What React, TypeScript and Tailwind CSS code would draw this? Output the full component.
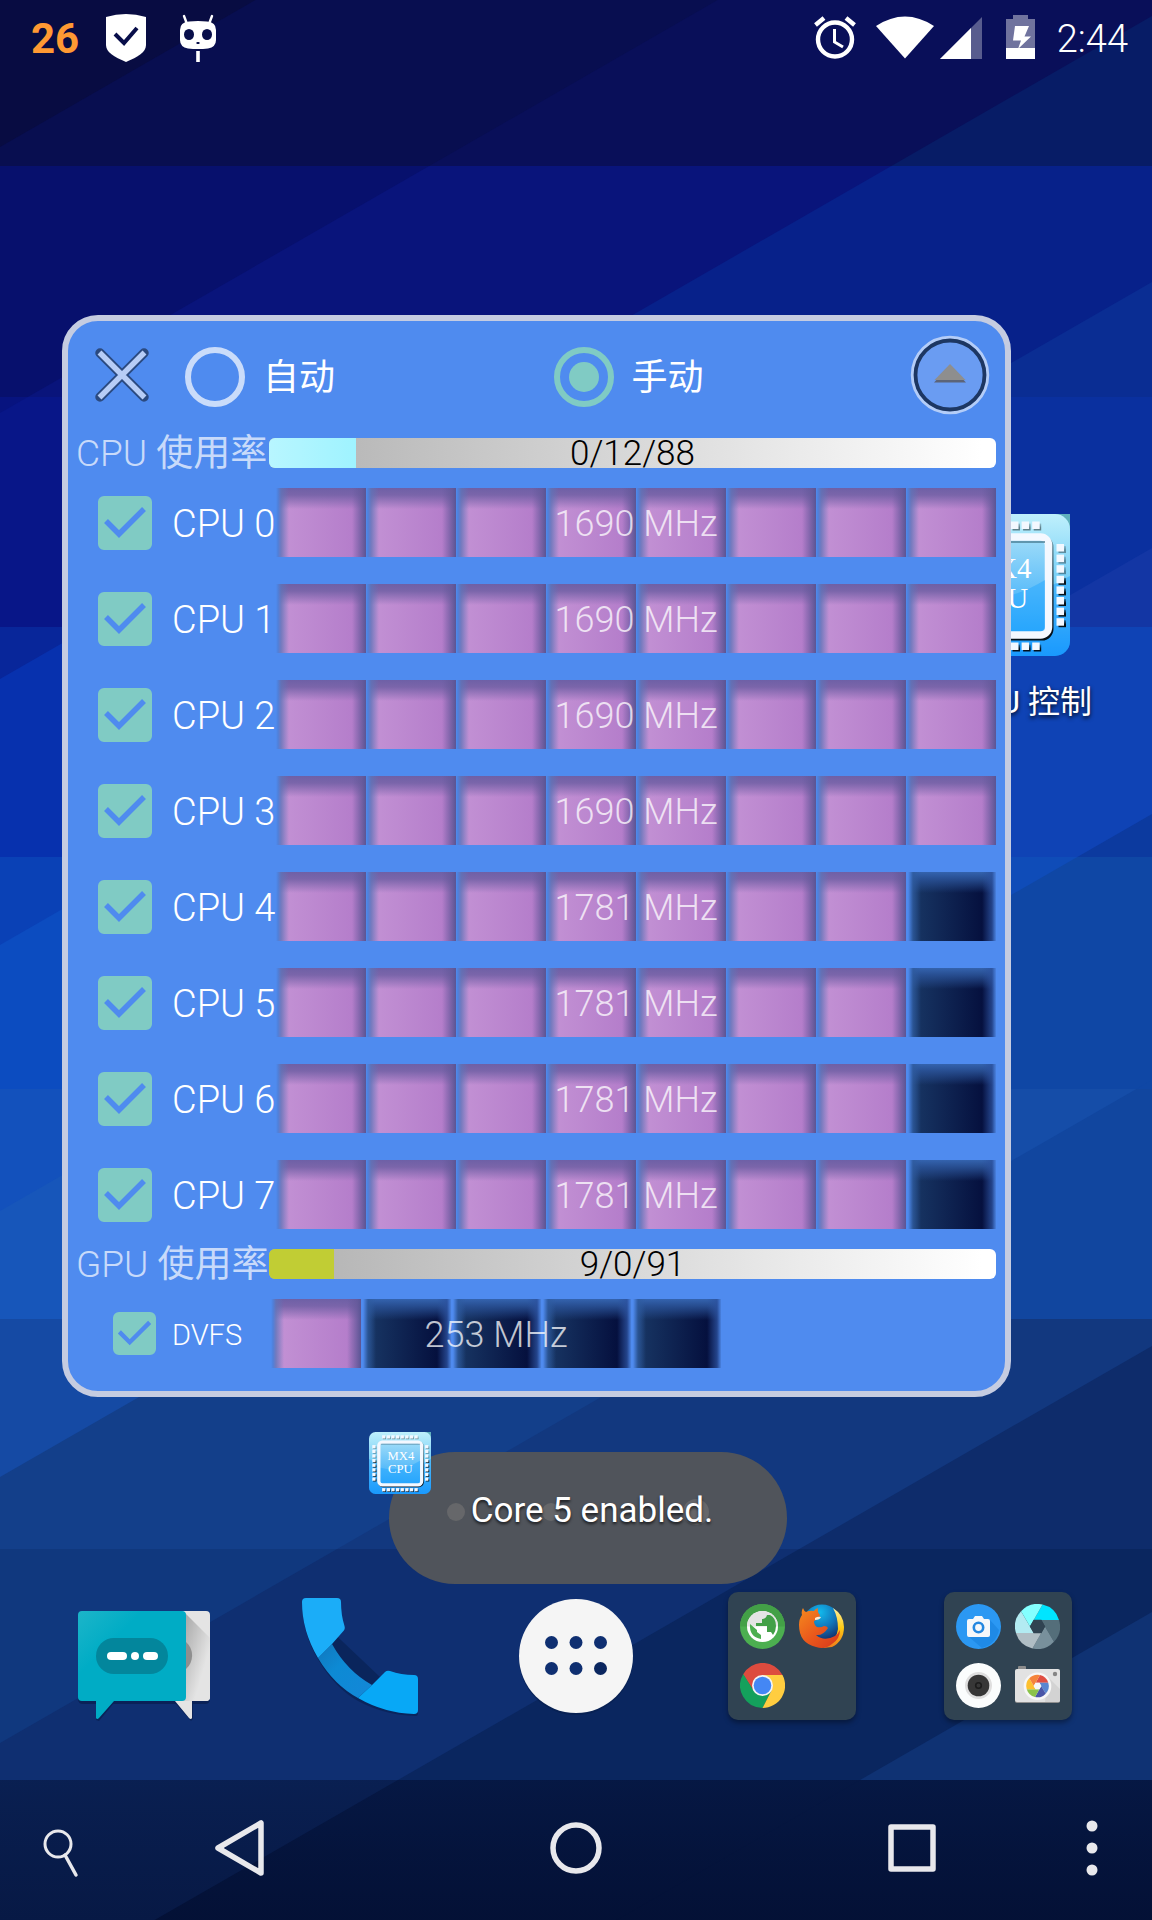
import React, { useId, useState } from "react";

/* ---------- wallpaper ---------- */

const BAND_EDGES = [0, 166, 397, 627, 857, 1089, 1319, 1549, 1780, 1920];
const STRIPE_EDGES = [-400, 147, 413, 679, 945, 1211, 1477, 1743, 2009, 2275, 2700];
const STRIPE_RISE = 663;

const BAND_COLOURS: string[][] = [
  ["#080c42", "#080e50", "#090f59", "#071c66", "#071c66", "#071c66", "#071c66", "#071c66", "#071c66", "#071c66"],
  ["#070f60", "#07106d", "#09147b", "#07218a", "#0a2d93", "#0a2d93", "#0a2d93", "#0a2d93", "#0a2d93", "#0a2d93"],
  ["#07127a", "#07137f", "#081688", "#07259a", "#0a309f", "#1336a4", "#1336a4", "#1336a4", "#1336a4", "#1336a4"],
  ["#08269a", "#08269a", "#08269a", "#0731ae", "#0a3bb2", "#0f43b5", "#0c3a9f", "#0c3a9f", "#0c3a9f", "#0c3a9f"],
  ["#0a40b6", "#0a40b6", "#0a40b6", "#0a41b6", "#0c4cc0", "#0f4cb8", "#0f47a5", "#0f47a5", "#0f47a5", "#0f47a5"],
  ["#1453bd", "#1453bd", "#1453bd", "#1453bd", "#1351bc", "#1756ba", "#154da8", "#11469f", "#11469f", "#11469f"],
  ["#164ba5", "#164ba5", "#164ba5", "#164ba5", "#164ba5", "#154aa4", "#133f8a", "#12387f", "#0e2c6b", "#0e2c6b"],
  ["#10387f", "#10387f", "#10387f", "#10387f", "#10387f", "#10387f", "#10387e", "#0f2f71", "#0a265f", "#0f3273"],
  ["#091f52", "#091f52", "#091f52", "#091f52", "#091f52", "#091f52", "#091f52", "#091e50", "#04133c", "#04133c"],
];

function Wallpaper() {
  return (
    <svg
      className="absolute inset-0 h-full w-full"
      viewBox="0 0 1152 1920"
      preserveAspectRatio="none"
      aria-hidden="true"
    >
      {BAND_COLOURS.map((colours, band) => {
        const top = BAND_EDGES[band];
        const bottom = BAND_EDGES[band + 1];
        return (
          <g key={band} clipPath={`url(#band-${band})`}>
            <clipPath id={`band-${band}`}>
              <rect x="0" y={top} width="1152" height={bottom - top} />
            </clipPath>
            <rect x="0" y={top} width="1152" height={bottom - top} fill={colours[0]} />
            {colours.map((colour, i) => (
              <polygon
                key={i}
                fill={colour}
                points={`0,${STRIPE_EDGES[i]} 1152,${STRIPE_EDGES[i] - STRIPE_RISE} 1152,2700 0,2700`}
              />
            ))}
          </g>
        );
      })}
      <linearGradient id="nav-shade" x1="0" y1="0" x2="0" y2="1">
        <stop offset="0" stopColor="#0a2356" stopOpacity="0.3" />
        <stop offset="1" stopColor="#020a24" stopOpacity="0.25" />
      </linearGradient>
      <rect x="0" y="1780" width="1152" height="140" fill="url(#nav-shade)" />
    </svg>
  );
}

/* ---------- status bar ---------- */

function StatusBar() {
  return (
    <header className="flex h-[76px] items-start justify-between pt-[14px] pr-6 pl-[31px]">
      <div className="flex items-start">
        <span className="w-[47px] text-[42px] leading-[50px] font-bold text-[#ff9933]">26</span>
        <svg className="ml-7 h-12 w-10" viewBox="0 0 40 48" aria-label="Security">
          <path d="M0 3Q20-3 40 3v28c0 7-8 12-20 17C8 43 0 38 0 31Z" fill="#fff" />
          <path d="m9 20 9 9 13-15" fill="none" stroke="#080e4a" strokeWidth="4" />
        </svg>
        <svg className="ml-[34px] h-12 w-9" viewBox="0 0 36 48" aria-label="CyanogenMod">
          <path d="M4 2l3 8M32 2l-3 8" stroke="#fff" strokeWidth="2.4" strokeLinecap="round" />
          <path d="M9 7.500Q18 6.500 27 7.500Q36 8 36 16v10q0 7-8 8.500-10 1.200-20 0Q0 33 0 26V16q0-8 9-8.500Z" fill="#fff" />
          <ellipse cx="9" cy="20.500" rx="5" ry="5.600" fill="#080e4a" />
          <ellipse cx="27" cy="20.500" rx="5" ry="5.600" fill="#080e4a" />
          <rect x="16.300" y="28" width="3.400" height="2" rx="1" fill="#080e4a" />
          <rect x="16.200" y="37" width="3.600" height="11" fill="#fff" />
        </svg>
      </div>
      <div className="flex items-start">
        <svg className="h-12 w-[42px]" viewBox="0 0 42 48" aria-label="Alarm">
          <circle cx="21" cy="25.500" r="17" fill="none" stroke="#fff" strokeWidth="4.400" />
          <path d="M1.500 11 10 4M40.500 11 32 4" stroke="#fff" strokeWidth="4.400" />
          <path d="M20.500 15v13l8.500 5" fill="none" stroke="#fff" strokeWidth="3" />
        </svg>
        <svg className="ml-5 h-12 w-[58px]" viewBox="0 0 58 48" aria-label="Wi-Fi">
          <path d="M0 12Q29-7 58 12L29 44.500Z" fill="#fff" />
        </svg>
        <svg className="ml-[6px] h-12 w-[42px]" viewBox="0 0 42 48" aria-label="Signal">
          <path d="M42 3v42H0Z" fill="#fff" opacity="0.320" />
          <path d="M31 14v31H0Z" fill="#fff" />
        </svg>
        <svg className="ml-6 h-12 w-[29px]" viewBox="0 0 29 48" aria-label="Battery charging">
          <path d="M7 1h15v4h7v40H0V5h7Z" fill="#fff" opacity="0.420" />
          <rect x="0" y="34" width="29" height="11" fill="#fff" />
          <path d="M9 12h14l-4.500 10.500H25L12 35l3-8.500H7Z" fill="#fff" />
        </svg>
        <time className="ml-[22px] pt-[1px] text-[38px] leading-[48px] font-light text-white">2:44</time>
      </div>
    </header>
  );
}

/* ---------- chip launcher icon ---------- */

const PINS = [0, 1, 2, 3, 4, 5, 6, 7].map((i) => 30 + i * 10.6);

function ChipIcon({ className }: { className: string }) {
  const id = useId();
  return (
    <svg className={className} viewBox="0 0 142 142" aria-hidden="true">
      <defs>
        <linearGradient id={`${id}a`} x1="0" y1="0" x2="0" y2="1">
          <stop offset="0" stopColor="#bff0fc" />
          <stop offset="0.500" stopColor="#6fcbf6" />
          <stop offset="1" stopColor="#1796ff" />
        </linearGradient>
        <linearGradient id={`${id}b`} x1="0" y1="0" x2="0" y2="1">
          <stop offset="0" stopColor="#9fdcf8" />
          <stop offset="1" stopColor="#2ba6fb" />
        </linearGradient>
        <linearGradient id={`${id}c`} x1="0" y1="0" x2="0" y2="1">
          <stop offset="0" stopColor="#000" stopOpacity="0.350" />
          <stop offset="0.600" stopColor="#000" stopOpacity="0.900" />
        </linearGradient>
      </defs>
      <path d="M120 0h22v22Z" fill="#5fb0bd" />
      <rect width="142" height="142" rx="15" fill={`url(#${id}a)`} />
      <path d="M0 62Q71 104 142 62v65a15 15 0 0 1-15 15H15a15 15 0 0 1-15-15Z" fill="#1c9dfd" opacity="0.450" />
      <g fill={`url(#${id}c)`}>
        {PINS.map((p) => (
          <React.Fragment key={p}>
            <rect x={p + 1.500} y="9.500" width="7.500" height="7" opacity="0.500" />
            <rect x={p + 1.500} y="130.500" width="7.500" height="7" />
            <rect x="9.500" y={p + 2} width="7.500" height="7" opacity={p > 60 ? 1 : 0.400} />
            <rect x="130.500" y={p + 2} width="7.500" height="7" opacity={p > 60 ? 1 : 0.400} />
          </React.Fragment>
        ))}
      </g>
      <g fill="#f3f8ff">
        {PINS.map((p) => (
          <React.Fragment key={p}>
            <rect x={p} y="7.500" width="7.500" height="7.500" />
            <rect x={p} y="128.500" width="7.500" height="7.500" />
            <rect x="7.500" y={p} width="7.500" height="7.500" />
            <rect x="128.500" y={p} width="7.500" height="7.500" />
          </React.Fragment>
        ))}
      </g>
      <rect x="24" y="25" width="98" height="98" rx="8" fill="none" stroke={`url(#${id}c)`} strokeWidth="7" />
      <rect x="22.500" y="23" width="98" height="98" rx="8" fill={`url(#${id}b)`} stroke="#f4f8ff" strokeWidth="7.500" />
      <path d="M27 82Q71 94 117 66v48q0 3-3 3H30q-3 0-3-3Z" fill="#1fa4ff" opacity="0.450" />
      <path d="M27 28h90" stroke="#4d7f96" strokeWidth="1.500" />
      <g fill="#fff" fontFamily="'Liberation Serif', serif" fontSize="29" textAnchor="middle">
        <text x="73" y="64">MX4</text>
        <text x="72" y="94">CPU</text>
      </g>
    </svg>
  );
}

/* ---------- control panel ---------- */

function TickBox({ label, small }: { label: string; small?: boolean }) {
  const id = useId();
  const [on, setOn] = useState(true);
  return (
    <div className={small ? "flex w-[203px] items-center pl-[45px]" : "flex w-[208px] items-center pl-[30px]"}>
      <span className={small ? "relative h-[43px] w-[43px] shrink-0" : "relative h-[54px] w-[54px] shrink-0"}>
        <input
          id={id}
          type="checkbox"
          checked={on}
          onChange={() => setOn(!on)}
          className="block h-full w-full appearance-none rounded-md border-4 border-[#80cbc4] checked:bg-[#80cbc4]"
        />
        {on && (
          <svg className="pointer-events-none absolute inset-0 h-full w-full" viewBox="0 0 54 54" aria-hidden="true">
            <path d="M8 25 21 38 46 13" fill="none" stroke="#4f8bef" strokeWidth="5.500" />
          </svg>
        )}
      </span>
      <label
        htmlFor={id}
        className={
          small
            ? "ml-[16px] pt-[2px] text-[29px] leading-9 font-light whitespace-nowrap text-white"
            : "ml-[20px] pt-[2px] text-[38px] leading-10 font-light whitespace-nowrap text-white"
        }
      >
        {label}
      </label>
    </div>
  );
}

function Cell({ lit }: { lit: boolean }) {
  return (
    <span
      className={
        lit
          ? "w-[90px] bg-[linear-gradient(to_right,#4f8bef_0px,#4f80da_2px,#5f74b8cc_5px,transparent_13px),linear-gradient(to_left,#5a5594_0px,#64599acc_4px,transparent_14px),linear-gradient(to_bottom,#6e60a6_0px,#7361a6e6_7px,transparent_21px),linear-gradient(to_right,#c493d5,#b27ac9)]"
          : "w-[90px] bg-[linear-gradient(to_right,#4f8bef_0px,#4f8bef_2px,#2f5ca0cc_7px,transparent_15px),linear-gradient(to_left,#4a82e0_0px,#2c529fcc_4px,transparent_14px),linear-gradient(to_bottom,#3463ae_0px,#2a5297e6_7px,transparent_21px),linear-gradient(to_right,#1a3a68,#05103e_85%)]"
      }
    />
  );
}

function FrequencyBar({ lit, total, text }: { lit: number; total: number; text: string }) {
  return (
    <div
      role="meter"
      aria-label={text}
      aria-valuemin={0}
      aria-valuemax={total}
      aria-valuenow={lit}
      className="relative flex h-[69px] shrink-0"
    >
      {Array.from({ length: total }, (_, i) => (
        <Cell key={i} lit={i < lit} />
      ))}
      <span className="absolute inset-0 flex items-center justify-center pt-[2px] text-[36px] leading-10 font-light text-white/75">
        {text}
      </span>
    </div>
  );
}

function UsageRow({ unit, text, share, tint }: { unit: string; text: string; share: number; tint: string }) {
  return (
    <div className="flex h-[30px] items-center pr-[9px]">
      <span className="w-[201px] shrink-0 pt-[2px] pl-2 text-[37px] leading-[30px] font-light whitespace-nowrap text-white/70">
        {unit} <span className="font-normal">使用率</span>
      </span>
      <div
        role="progressbar"
        aria-label={`${unit} 使用率`}
        aria-valuenow={share}
        className="relative h-[30px] flex-1 rounded-md bg-[linear-gradient(to_right,#b0b0b0,#ffffff_98%)]"
      >
        <div className={tint} style={{ width: `${share}%` }} />
        <span className="absolute inset-0 flex items-center justify-center pt-[2px] text-[35px] leading-10 font-light text-black">
          {text}
        </span>
      </div>
    </div>
  );
}

function ModeRadio({
  label,
  checked,
  onSelect,
}: {
  label: string;
  checked: boolean;
  onSelect: () => void;
}) {
  return (
    <label className="flex flex-1 items-center gap-[18px] text-[36px] leading-[60px] text-white">
      <input
        type="radio"
        name="mode"
        checked={checked}
        onChange={onSelect}
        className="h-[60px] w-[60px] appearance-none rounded-full border-[6px] border-white/70 bg-clip-content p-[9px] checked:border-[#80cbc4] checked:bg-[#80cbc4]"
      />
      <span className="pt-[2px]">{label}</span>
    </label>
  );
}

const CORES = [1690, 1690, 1690, 1690, 1781, 1781, 1781, 1781];

function ControlPanel() {
  const [mode, setMode] = useState<"auto" | "manual">("manual");
  return (
    <section className="relative mt-[239px] mr-[141px] ml-[62px] rounded-[36px] border-[6px] border-[#c5cce1] bg-[#4f8bef] pb-[23px]">
      <div className="flex h-[117px] items-center pr-[15px] pb-[9px] pl-[27px]">
        <button type="button" aria-label="Close" className="h-[54px] w-[54px]">
          <svg viewBox="0 0 54 54" className="h-full w-full">
            <path d="M5 5 49 49M49 5 5 49" stroke="#2b4a80" strokeWidth="9.500" strokeLinecap="round" />
            <path d="M4.500 4.500 49.500 49.500M49.500 4.500 4.500 49.500" stroke="#b7cdf6" strokeWidth="5.500" />
          </svg>
        </button>
        <div className="-mr-3 flex flex-1 pt-1 pl-9">
          <ModeRadio label="自动" checked={mode === "auto"} onSelect={() => setMode("auto")} />
          <ModeRadio label="手动" checked={mode === "manual"} onSelect={() => setMode("manual")} />
        </div>
        <button type="button" aria-label="Collapse" className="h-[80px] w-[80px]">
          <svg viewBox="0 0 80 80" className="h-full w-full">
            <circle cx="40" cy="40" r="37.500" fill="#6a9cf2" stroke="#b4cdf8" strokeWidth="3.500" />
            <circle cx="40" cy="40" r="34.500" fill="none" stroke="#1d3763" strokeWidth="3.800" />
            <path d="M40 30.500 56 47.500H24Z" fill="#5c6478" />
            <path d="M40 29 55.500 45H24.500Z" fill="#8e8e8e" />
          </svg>
        </button>
      </div>

      <UsageRow
        unit="CPU"
        text="0/12/88"
        share={12}
        tint="h-full rounded-l-md bg-[linear-gradient(to_right,#b8f6ff,#9ff3ff)]"
      />

      <div className="mt-5 flex flex-col gap-[27px] pr-[9px]">
        {CORES.map((mhz, i) => (
          <div key={i} className="flex items-center justify-between">
            <TickBox label={`CPU ${i}`} />
            <FrequencyBar lit={mhz === 1690 ? 8 : 7} total={8} text={`${mhz} MHz`} />
          </div>
        ))}
      </div>

      <div className="mt-5">
        <UsageRow unit="GPU" text="9/0/91" share={9} tint="h-full rounded-l-md bg-[#c1cd34]" />
      </div>

      <div className="mt-5 flex items-center">
        <TickBox label="DVFS" small />
        <FrequencyBar lit={1} total={5} text="253 MHz" />
      </div>
    </section>
  );
}

/* ---------- toast ---------- */

function Toast() {
  return (
    <div className="mt-[55px] flex justify-center pl-6">
      <div
        role="status"
        className="relative flex h-[132px] w-[398px] items-center justify-center rounded-full bg-[#50545b] pb-[14px]"
      >
        <i className="absolute top-[51px] left-[58px] h-[18px] w-[18px] rounded-full bg-[#66676a]" />
        <i className="absolute top-[51px] left-[153px] h-[18px] w-[18px] rounded-full bg-[#66676a]" />
        <i className="absolute top-[47px] left-[294px] h-[26px] w-[26px] rounded-full bg-[#66676a]" />
        <p className="relative pl-2 text-[35px] leading-[48px] whitespace-nowrap text-white [text-shadow:0_2px_3px_rgba(0,0,0,0.7)]">
          Core 5 enabled.
        </p>
        <ChipIcon className="absolute -top-5 -left-5 h-[62px] w-[62px]" />
      </div>
    </div>
  );
}

/* ---------- dock ---------- */

function MessagesIcon() {
  return (
    <svg className="h-36 w-36" viewBox="0 0 144 144" aria-hidden="true">
      <defs>
        <linearGradient id="msg-teal" x1="0" y1="0" x2="0.300" y2="0.300">
          <stop offset="0" stopColor="#1cb5c9" />
          <stop offset="1" stopColor="#00acc5" />
        </linearGradient>
        <linearGradient id="msg-shade" x1="0" y1="0" x2="1" y2="1">
          <stop offset="0" stopColor="#a5a5a5" />
          <stop offset="0.700" stopColor="#e4e4e4" />
        </linearGradient>
      </defs>
      <path d="M24 120v16l3 1 15-18M103 119l16 18 2-2v-16M6 115q0 5 5 5h122q5 0 5-5" fill="#061b48" opacity="0.600" />
      <path d="M100 27h34q4 0 4 4v82q0 4-4 4h-14v17q-1 2-3 0l-14-17h-3Z" fill="#e4e4e4" />
      <path d="M113 29 138 54v59q0 4-4 4h-22Z" fill="url(#msg-shade)" />
      <path d="M114 58a18 18 0 0 1 0 27Z" fill="#8f8f8f" />
      <path d="M10 27h100q4 0 4 4v82q0 4-4 4H42l-15 17q-2 2-3 0v-17H10q-4 0-4-4V31q0-4 4-4Z" fill="url(#msg-teal)" />
      <rect x="24" y="54" width="72" height="36" rx="18" fill="#03869c" />
      <rect x="35" y="68" width="20" height="8" rx="4" fill="#fff" />
      <circle cx="63" cy="72" r="4" fill="#fff" />
      <rect x="71" y="68" width="15" height="8" rx="4" fill="#fff" />
    </svg>
  );
}

function PhoneIcon() {
  return (
    <svg className="h-36 w-36" viewBox="0 0 144 144" aria-hidden="true">
      <defs>
        <linearGradient id="phone-mid" x1="0" y1="0" x2="1" y2="1">
          <stop offset="0" stopColor="#1177bd" />
          <stop offset="0.400" stopColor="#0d8ad4" />
          <stop offset="1" stopColor="#1487d8" />
        </linearGradient>
      </defs>
      <path d="M15 20Q14 50 31 77q16 27 39 40 26 14 58 15 2 0 2-3" fill="#061b48" opacity="0.500" />
      <path d="M30 74 44 60q15 27 40 41l-14 13Q46 101 30 74Z" fill="url(#phone-mid)" />
      <path d="M18 14h31q4 0 4 4 0 13 3.500 24 1 3-1.500 5.500L44 60 30 74Q14 47 14 18q0-4 4-4Z" fill="#1badf8" />
      <path d="M97 88q2-2 5-1 11 4 24 4 4 0 4 4v31q0 4-4 4-30-1-56-16l14-13Z" fill="#08a8f6" />
    </svg>
  );
}

function AppsIcon() {
  return (
    <svg className="h-36 w-36" viewBox="0 0 144 144" aria-hidden="true">
      <circle cx="72" cy="74" r="57" fill="#061b48" opacity="0.500" />
      <circle cx="72" cy="72" r="57" fill="#f5f5f5" />
      {[47.5, 72, 96.5].map((x) => (
        <React.Fragment key={x}>
          <circle cx={x} cy="58.500" r="6.500" fill="#0f2f71" />
          <circle cx={x} cy="84.500" r="6.500" fill={x > 90 ? "#0a265f" : "#0f2f71"} />
        </React.Fragment>
      ))}
    </svg>
  );
}

const MINI = "h-[45px] w-[45px]";

function GlobeMini() {
  return (
    <svg className={MINI} viewBox="0 0 45 45" aria-hidden="true">
      <circle cx="22.500" cy="22.500" r="22.500" fill="#4caf50" />
      <path d="M0 22.500a22.500 22.500 0 0 1 45 0Z" fill="#43a047" />
      <circle cx="22.500" cy="22.500" r="15.500" fill="#fff" />
      <path d="M7 22.500a15.500 15.500 0 0 1 31 0Z" fill="#e4e4e4" />
      <path d="M27 11q-1 4-5 4v4h-6v3h11v6h4l2 3q3-4 3-9 0-8-6-11Z" fill="#43a047" />
      <path d="M10 20q-1 13 11 15v-4l-4-3v-2Z" fill="#4caf50" />
    </svg>
  );
}

function FirefoxMini() {
  return (
    <svg className={MINI} viewBox="0 0 45 45" aria-hidden="true">
      <defs>
        <radialGradient id="ff-globe" cx="0.450" cy="0.200" r="0.800">
          <stop offset="0" stopColor="#12b9ec" />
          <stop offset="0.500" stopColor="#1276ba" />
          <stop offset="1" stopColor="#12235c" />
        </radialGradient>
        <linearGradient id="ff-fox" x1="0" y1="0" x2="1" y2="1">
          <stop offset="0" stopColor="#f58a1e" />
          <stop offset="0.500" stopColor="#ea5a1c" />
          <stop offset="1" stopColor="#d4351c" />
        </linearGradient>
        <linearGradient id="ff-tail" x1="0" y1="0" x2="0" y2="1">
          <stop offset="0" stopColor="#fff1a0" />
          <stop offset="0.500" stopColor="#fdc914" />
          <stop offset="1" stopColor="#ef7b1b" />
        </linearGradient>
      </defs>
      <circle cx="23" cy="20" r="19.500" fill="url(#ff-globe)" />
      <path d="M34 4q11 7 11 19 0 14-12 20l-9 1q14-8 15-19 0-12-5-21Z" fill="url(#ff-tail)" />
      <path d="M4 4q1 3 3 4 4-2 8-1 1-2 4-3-1 4 2 7-1 4-6 6 0 4 3 6 4 1 7-1 3 0 4 2-5 8-12 7 8 7 19 1 3-2 5-6 0 9-8 14-7 6-16 3Q0 39 0 21q0-6 3-10-1-4 1-7Z" fill="url(#ff-fox)" />
      <path d="M16 14q3-2 6-1-1 3-6 3Z" fill="#ffe9d2" />
    </svg>
  );
}

function ChromeMini() {
  return (
    <svg className={MINI} viewBox="-22.5 -22.5 45 45" aria-hidden="true">
      <path d="M-19.500-11A22.400 22.400 0 0 1 20-10.500H0L-9 5Z" fill="#dd4b3e" />
      <path d="M-19.200-11.500A22.400 22.400 0 0 0 0 22.400L9 5-9 5Z" fill="#14a05c" />
      <path d="M20-10.500A22.400 22.400 0 0 1 0 22.400L9 5 0-10.500Z" fill="#ffcd40" />
      <circle r="10.500" fill="#f4f4f4" />
      <circle r="8.800" fill="#4487f4" />
    </svg>
  );
}

function CameraMini() {
  return (
    <svg className={MINI} viewBox="0 0 45 45" aria-hidden="true">
      <circle cx="22.500" cy="22.500" r="22.500" fill="#2b98f3" />
      <path d="M34 16 43 26q-3 14-17 18L13 33Z" fill="#1f8ae6" />
      <path d="M13 15h4l2-3h7l2 3h4q2 0 2 2v14q0 2-2 2H13q-2 0-2-2V17q0-2 2-2Z" fill="#f5f7fa" />
      <circle cx="22.500" cy="23.500" r="4.700" fill="none" stroke="#2487e0" strokeWidth="2.600" />
    </svg>
  );
}

/* Blade i runs from one hexagon corner out to the rim, sharing its straight edge with the next. */
function ShutterBlades({ colours }: { colours: string[] }) {
  const point = (angle: number, r: number) =>
    `${r * Math.cos((angle * Math.PI) / 180)},${r * Math.sin((angle * Math.PI) / 180)}`;
  return (
    <>
      {colours.map((colour, i) => {
        const a = i * 60;
        return (
          <path
            key={i}
            fill={colour}
            d={`M${point(a - 120, 7.5)} L${point(a - 77, 22.5)} A22.5 22.5 0 0 1 ${point(a - 17, 22.5)} L${point(a - 60, 7.5)} Z`}
          />
        );
      })}
      <path d={`M${[0, 60, 120, 180, 240, 300].map((a) => point(a, 7.7)).join("L")}Z`} className="fill-current" />
    </>
  );
}

function ShutterMini() {
  return (
    <svg className="h-[45px] w-[45px] text-[#304352]" viewBox="-22.5 -22.5 45 45" aria-hidden="true">
      <ShutterBlades colours={["#00e5ff", "#546e7a", "#78909c", "#b0bec5", "#b2ebf2", "#84ffff"]} />
    </svg>
  );
}

function LensMini() {
  return (
    <svg className={MINI} viewBox="0 0 45 45" aria-hidden="true">
      <circle cx="22.500" cy="22.500" r="22.500" fill="#fbfdfd" />
      <circle cx="22.500" cy="22.500" r="13.500" fill="#dfdfdf" />
      <circle cx="22.500" cy="22.500" r="10.800" fill="#373737" />
      <circle cx="22.500" cy="22.500" r="2.800" fill="none" stroke="#1c1c1c" strokeWidth="1.600" />
    </svg>
  );
}

function GoogleCameraMini() {
  return (
    <svg className={MINI} viewBox="0 0 45 45" aria-hidden="true">
      <rect x="3" y="3" width="8" height="6" rx="1" fill="#8c8c8c" />
      <rect x="0" y="7" width="45" height="33" rx="2" fill="#8f8f8f" />
      <rect x="0" y="6" width="45" height="33" rx="2" fill="#e2e2e2" />
      <path d="M33 14 45 26v11q0 2-2 2H30Z" fill="#d3d3d3" />
      <circle cx="40" cy="11" r="2.200" fill="#858585" />
      <circle cx="22.500" cy="23.200" r="13.800" fill="#f7f7f7" />
      <g transform="translate(22.500 23) scale(0.500)" className="text-[#f7f7f7]">
        <ShutterBlades colours={["#e04f43", "#5a86d0", "#4a56a8", "#8bc34a", "#fdc02f", "#f5843c"]} />
      </g>
    </svg>
  );
}

function Folder({ label, children }: { label: string; children: React.ReactNode }) {
  return (
    <button
      type="button"
      aria-label={label}
      className="grid grid-cols-[45px_45px] grid-rows-[45px_45px] gap-[14px] rounded-[10px] bg-[#304352] p-3 shadow-[0_3px_5px_rgba(0,0,0,0.35)]"
    >
      {children}
    </button>
  );
}

function Dock() {
  return (
    <nav aria-label="Dock" className="grid h-36 grid-cols-5 place-items-center px-9">
      <button type="button" aria-label="Messages">
        <MessagesIcon />
      </button>
      <button type="button" aria-label="Phone">
        <PhoneIcon />
      </button>
      <button type="button" aria-label="All apps">
        <AppsIcon />
      </button>
      <Folder label="Browsers">
        <GlobeMini />
        <FirefoxMini />
        <ChromeMini />
      </Folder>
      <Folder label="Cameras">
        <CameraMini />
        <ShutterMini />
        <LensMini />
        <GoogleCameraMini />
      </Folder>
    </nav>
  );
}

/* ---------- navigation bar ---------- */

function NavButton({ label, children }: { label: string; children: React.ReactNode }) {
  return (
    <button type="button" aria-label={label} className="flex w-[120px] justify-center">
      <svg className="h-16 w-16" viewBox="0 0 64 64" fill="none" stroke="#e8e8ec" strokeWidth="5.500" strokeLinejoin="round">
        {children}
      </svg>
    </button>
  );
}

function NavigationBar() {
  return (
    <nav aria-label="System" className="mt-auto flex h-[140px] items-center justify-between pb-1">
      <div className="flex gap-[60px]">
        <NavButton label="Search">
          <circle cx="30" cy="28" r="13" strokeWidth="3" />
          <path d="M37 39 48 59" strokeWidth="3.500" strokeLinecap="round" />
        </NavButton>
        <NavButton label="Back">
          <path d="M53 7v50L10 32Z" />
        </NavButton>
      </div>
      <NavButton label="Home">
        <circle cx="32" cy="32" r="23" />
      </NavButton>
      <div className="flex gap-[60px]">
        <NavButton label="Recent apps">
          <rect x="11" y="11" width="42" height="42" />
        </NavButton>
        <NavButton label="Menu">
          <g fill="#e8e8ec" stroke="none">
            <circle cx="32" cy="10" r="5.500" />
            <circle cx="32" cy="32" r="5.500" />
            <circle cx="32" cy="54" r="5.500" />
          </g>
        </NavButton>
      </div>
    </nav>
  );
}

/* ---------- screen ---------- */

export default function App() {
  return (
    <div className="relative isolate flex min-h-screen flex-col overflow-hidden bg-[#0c2e7e] font-['Roboto','Noto_Sans_CJK_SC',sans-serif]">
      <div className="absolute inset-0 -z-10">
        <Wallpaper />
      </div>
      <a
        href="#cpu"
        className="absolute top-[514px] right-[60px] flex flex-col items-end gap-[22px] text-[32px] leading-[48px] text-white"
      >
        <ChipIcon className="mr-[22px] h-[142px] w-[142px]" />
        <span className="whitespace-nowrap [text-shadow:0_2px_4px_rgba(0,0,0,0.9)]">MX4 CPU 控制</span>
      </a>
      <StatusBar />
      <ControlPanel />
      <Toast />
      <Dock />
      <NavigationBar />
    </div>
  );
}
